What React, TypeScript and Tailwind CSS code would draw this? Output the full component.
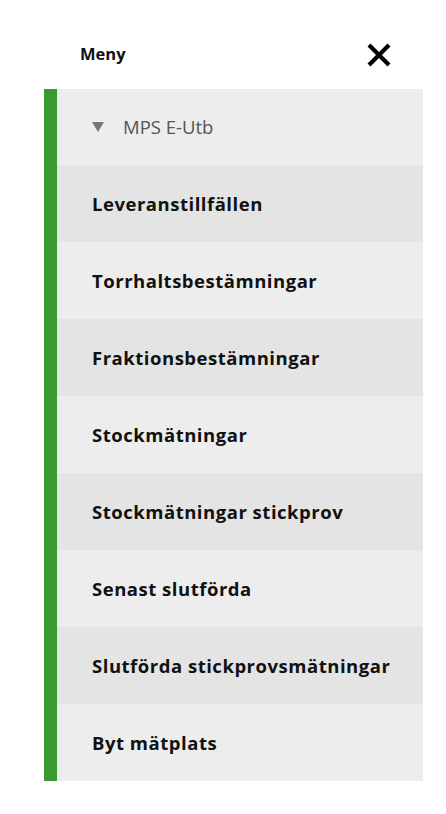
import React from "react";

const items = [
  "Leveranstillfällen",
  "Torrhaltsbestämningar",
  "Fraktionsbestämningar",
  "Stockmätningar",
  "Stockmätningar stickprov",
  "Senast slutförda",
  "Slutförda stickprovsmätningar",
  "Byt mätplats",
];

export default function App() {
  return (
    <div
      className="w-[446px] h-[814px] bg-white"
      style={{ fontFamily: '"Open Sans", "Noto Sans", sans-serif' }}
    >
      <div className="pl-[44px] pr-[23px]">
        <div className="flex items-center justify-between h-[69px] mt-[20px] pl-[36px] pr-[31px]">
          <span className="text-[16.5px] font-bold text-[#111]">Meny</span>
          <svg width="26" height="26" viewBox="0 0 26 26" aria-label="close">
            <path d="M3 3 L23 23 M23 3 L3 23" stroke="#000" strokeWidth="4.2" strokeLinecap="butt" />
          </svg>
        </div>
        <div className="flex">
          <div className="w-[13px] bg-[#3a9a30]" />
          <div className="flex-1">
            <div className="h-[76px] bg-[#ededed] flex items-center pl-[35px]">
              <svg width="12" height="10" viewBox="0 0 12 10" className="mr-[19px]">
                <path d="M0 0 L12 0 L6 10 Z" fill="#777" />
              </svg>
              <span className="text-[18.5px] text-[#555]">MPS E-Utb</span>
            </div>
            {items.map((t, i) => (
              <div
                key={t}
                className={`h-[77px] flex items-center pl-[35px] ${i % 2 === 0 ? "bg-[#e4e4e4]" : "bg-[#ededed]"}`}
              >
                <span className="text-[18.5px] font-bold text-[#111] tracking-[0.52px]">{t}</span>
              </div>
            ))}
          </div>
        </div>
      </div>
    </div>
  );
}
